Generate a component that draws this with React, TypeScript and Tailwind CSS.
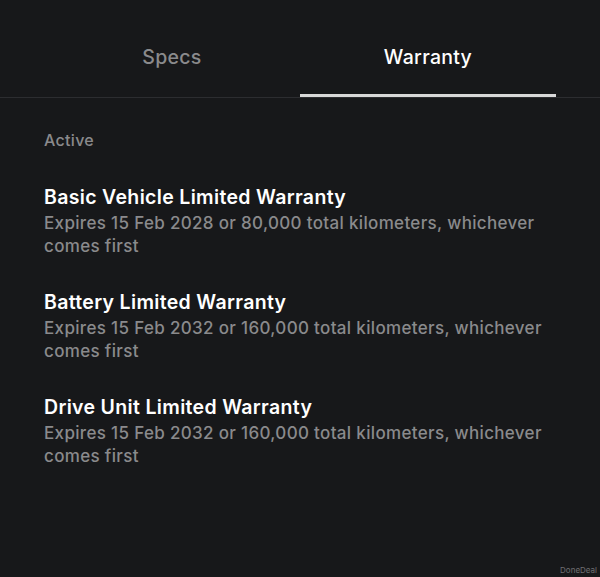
const items = [
  {
    title: "Basic Vehicle Limited Warranty",
    desc: "Expires 15 Feb 2028 or 80,000 total kilometers, whichever comes first",
  },
  {
    title: "Battery Limited Warranty",
    desc: "Expires 15 Feb 2032 or 160,000 total kilometers, whichever comes first",
  },
  {
    title: "Drive Unit Limited Warranty",
    desc: "Expires 15 Feb 2032 or 160,000 total kilometers, whichever comes first",
  },
]

export default function App() {
  return (
    <main className="relative h-[577px] w-[600px] overflow-hidden bg-[#17181a] font-['Inter',sans-serif]">
      <div className="border-b border-[#2c2d30]">
        <div className="mx-[44px] flex">
          <div className="flex h-[97px] w-[256px] items-center justify-center pt-[19px] text-[19.5px] font-medium tracking-[0.3px] text-[#8a8a8c]">
            Specs
          </div>
          <div className="relative flex h-[97px] w-[256px] items-center justify-center pt-[19px] text-[19.5px] font-medium tracking-[0.3px] text-white">
            Warranty
            <div className="absolute bottom-0 left-0 h-[3px] w-full bg-[#d8d8d8]" />
          </div>
        </div>
      </div>
      <div className="px-[44px] pt-[30px]">
        <p className="text-[16px] font-medium tracking-[0.3px] text-[#8a8a8c]">Active</p>
        <div className="mt-[33px] flex flex-col gap-[32px]">
          {items.map((it) => (
            <div key={it.title}>
              <h2 className="text-[19.5px] font-semibold leading-[24px] tracking-[0.33px] text-white">{it.title}</h2>
              <p className="mt-[3px] text-[17px] font-medium leading-[23px] tracking-[0.33px] text-[#8a8a8c]">
                {it.desc}
              </p>
            </div>
          ))}
        </div>
      </div>
      <div className="absolute bottom-[1px] right-[3px] text-[8px] text-[#6f6f72]">DoneDeal</div>
    </main>
  )
}
